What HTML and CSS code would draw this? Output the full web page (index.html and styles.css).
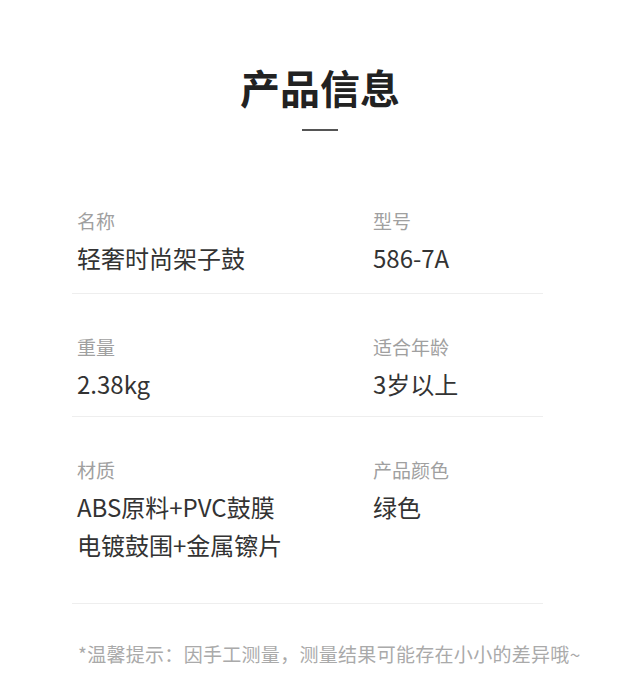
FILE: index.html
```html
<!DOCTYPE html>
<html lang="zh-CN">
<head>
  <meta charset="UTF-8" />
  <meta name="viewport" content="width=device-width, initial-scale=1.0"/>
  <title>产品信息</title>
  <link rel="stylesheet" href="styles.css">
</head>
<body>

  <div class="container">
    <div class="header">
      <h1>产品信息</h1>
      <div class="underline"></div>
    </div>

    <div class="info-list">
      <div class="info-row">
        <div class="info-item">
          <p class="label">名称</p>
          <p class="value">轻奢时尚架子鼓</p>
        </div>
        <div class="info-item">
          <p class="label">型号</p>
          <p class="value">586-7A</p>
        </div>
      </div>

      <div class="info-row">
        <div class="info-item">
          <p class="label">重量</p>
          <p class="value">2.38kg</p>
        </div>
        <div class="info-item">
          <p class="label">适合年龄</p>
          <p class="value">3岁以上</p>
        </div>
      </div>

      <div class="info-row">
        <div class="info-item">
          <p class="label">材质</p>
          <p class="value">ABS原料+PVC鼓膜<br>电镀鼓围+金属镲片</p>
        </div>
        <div class="info-item">
          <p class="label">产品颜色</p>
          <p class="value">绿色</p>
        </div>
      </div>
    </div>

    <p class="tip">*温馨提示：因手工测量，测量结果可能存在小小的差异哦~</p>
  </div>

</body>
</html>
```

FILE: styles.css
```css
* {
  margin: 0;
  padding: 0;
  box-sizing: border-box;
}

body {
  background-color: #fff;
  font-family: "Noto Sans CJK SC", "Noto Sans", sans-serif;
}

.container {
  width: 471px;
  margin: 0 0 0 72px;
  padding-top: 63px;
}

.header {
  display: flex;
  flex-direction: column;
  align-items: center;
  margin-left: -72px;
  width: 640px;
}

.header h1 {
  font-size: 40px;
  line-height: 48px;
  font-weight: bold;
  color: #222;
}

.underline {
  width: 36px;
  height: 2px;
  margin-top: 18px;
  background-color: #555;
}

.info-list {
  margin-top: 38px;
}

.info-row {
  display: grid;
  grid-template-columns: 296px 1fr;
  padding: 40px 0 13px 5px;
  border-bottom: 1px solid #eee;
}

.info-row:first-child {
  padding-top: 39px;
  padding-bottom: 16px;
}

.info-row:last-child {
  padding-bottom: 39px;
}

.label {
  font-size: 19px;
  line-height: 26px;
  color: #a0a0a0;
  margin-bottom: 5px;
}

.value {
  font-size: 24px;
  line-height: 38px;
  color: #333;
}

.tip {
  margin-top: 37px;
  padding-left: 6px;
  font-size: 19px;
  line-height: 26px;
  letter-spacing: 0.3px;
  color: #aaa;
  white-space: nowrap;
}
```
